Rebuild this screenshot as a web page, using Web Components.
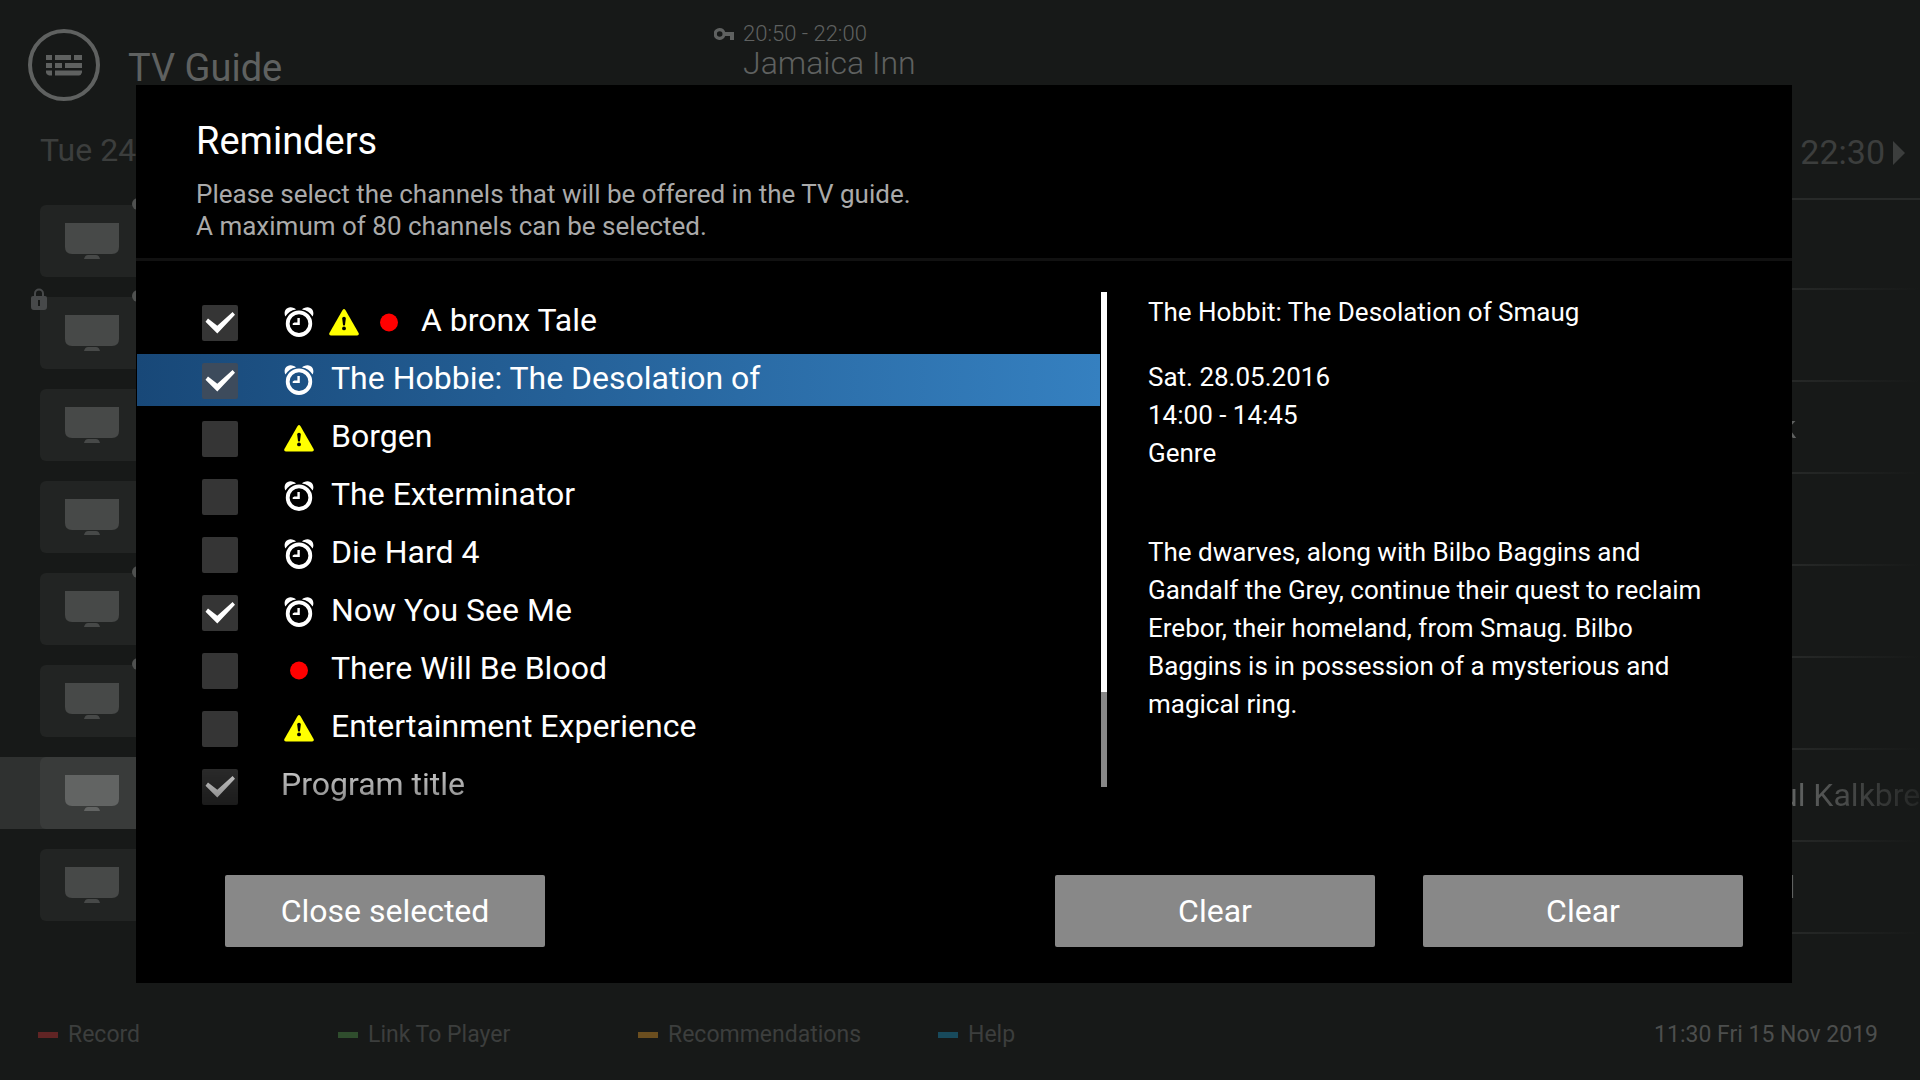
<!DOCTYPE html>
<html lang="en">
<head>
<meta charset="utf-8">
<title>TV Guide – Reminders</title>
<style>
  html, body { margin: 0; }
  body {
    background: #171918;
    color: #fff;
    font-family: Roboto, "Liberation Sans", sans-serif;
    overflow-x: hidden;
  }
</style>
</head>
<body>
<tv-guide></tv-guide>

<script>
const define = (name, html, setup) => {
  const template = document.createElement('template');
  template.innerHTML = html;
  customElements.define(name, class extends HTMLElement {
    constructor() {
      super();
      this.attachShadow({ mode: 'open' }).append(template.content.cloneNode(true));
    }
    connectedCallback() {
      if (setup) setup(this, this.shadowRoot);
    }
  });
};

/* Small status glyphs shown before a programme title */
const ICONS = {
  alarm: `<svg width="30" height="30" viewBox="0 0 30 30" fill="#fff">
    <circle cx="15" cy="16.7" r="11.3" fill="none" stroke="#fff" stroke-width="3.8"/>
    <path d="M1.4 9.6C-.4 6 .9 .8 5.4 .4 8.400 .1 10.800 1.200 12 2.400A15 15 0 0 0 1.400 9.600z"/>
    <path d="M28.600 9.600C30.400 6 29.100 .8 24.600 .4 21.600 .1 19.200 1.200 18 2.400A15 15 0 0 1 28.600 9.600z"/>
    <path d="M13.400 11h2.400v6.900H8.700v-1.300l1.600-1h3.100z"/></svg>`,
  warning: `<svg width="30" height="30" viewBox="0 0 30 30">
    <path d="M13.600 2.900q1.400-2 2.800 0L29.600 26q.8 2.400-1.400 2.400H1.800q-2.200 0-1.400-2.400z" fill="#ff0"/>
    <path d="M13.200 11.500q0-1.800 1.800-1.800t1.800 1.800l-.8 6.500q-1 1.200-2 0z" fill="#000"/>
    <circle cx="15" cy="21.400" r="1.900" fill="#000"/></svg>`,
  record: `<svg width="30" height="30" viewBox="0 0 30 30"><circle cx="15" cy="15.500" r="9" fill="#f00"/></svg>`
};

define('status-icon', `
  <style>
    :host { display: flex; justify-content: center; align-items: center; width: 36px; height: 34px; }
    svg { display: block; }
  </style>`, (el, root) => {
  root.innerHTML += ICONS[el.getAttribute('kind')];
});

define('guide-header', `
  <style>
    :host { display: grid; grid-template-columns: 714px 1fr; color: #5f6160; height: 101px; }
    .brand { display: flex; align-items: flex-end; gap: 28px; padding-left: 28px; }
    .brand svg { display: block; }
    h1 { margin: 0; padding-bottom: 11px; font-size: 38px; line-height: 44px; font-weight: 400; }
    .now { display: grid; grid-template-columns: 29px 1fr; align-content: start; padding-top: 22px; font-weight: 300; }
    .now svg { align-self: center; }
    .time { font-size: 22px; line-height: 24px; }
    .name { grid-column: 2; font-size: 32px; line-height: 34px; }
  </style>
  <div class="brand">
    <svg width="72" height="72" viewBox="0 0 72 72" fill="currentColor">
      <circle cx="36" cy="36" r="34" fill="none" stroke="currentColor" stroke-width="4"/>
      <path d="M18 26h6v5h-6zM27 26h16v5H27zM46 26h8v5h-8zM18 34h6v5h-6zM27 34h7v5h-7zM37 34h17v5H37zM18 41.500h6v5h-3q-3-1-3-3zM27 41.500h27v2q-1 3-3 3H27z"/>
    </svg>
    <h1>TV Guide</h1>
  </div>
  <div class="now">
    <svg width="20" height="12" viewBox="0 0 20 12" fill="currentColor">
      <path fill-rule="evenodd" d="M5.700 0A6 6 0 0 1 11.200 4H20v8h-4V8h-4.800A6 6 0 1 1 5.700 0zM5.700 3.200a2.800 2.800 0 1 0 0 5.600 2.800 2.800 0 0 0 0-5.600z"/>
    </svg>
    <span class="time">20:50 - 22:00</span>
    <span class="name">Jamaica Inn</span>
  </div>`);

define('day-bar', `
  <style>
    :host { display: block; height: 99px; color: #3c3e3d; }
    .bar { display: flex; justify-content: space-between; align-items: flex-start;
           box-sizing: border-box; height: 97px; padding: 30px 15px 0 40px; }
    .day { font-size: 32px; line-height: 38px; }
    .time { display: flex; gap: 8px; font-size: 34px; line-height: 42px; }
    svg { margin-top: 10px; }
    .line { height: 2px; margin-left: 160px; background: #282a29; }
  </style>
  <div class="bar">
    <span class="day">Tue 24</span>
    <span class="time">22:30<svg width="12" height="24" viewBox="0 0 12 24"><path d="M0 0l12 12L0 24z" fill="currentColor"/></svg></span>
  </div>
  <div class="line"></div>`);

define('channel-row', `
  <style>
    :host { display: grid; grid-template-columns: 160px 1fr; height: 92px;
            --tile: #222423; --glyph: #474948; }
    :host([active]) { --tile: #393b3a; --glyph: #626463; }
    .channel { box-sizing: border-box; height: 72px; margin-top: 7px; padding-left: 40px; }
    :host([active]) .channel { background: #2f3130; }
    .tile { position: relative; box-sizing: border-box; width: 104px; height: 72px; padding: 18px 25px;
            border-radius: 6px; background: var(--tile); }
    .tile > svg { display: block; }
    .dot { display: none; position: absolute; right: 0; top: -7px; width: 12px; height: 12px;
           border-radius: 50%; background: #4f5150; }
    :host([dot]) .dot { display: block; }
    .tile > .lock { display: none; position: absolute; left: -9px; top: -9px; }
    :host([locked]) .lock { display: block; }
    .programme { display: flex; justify-content: flex-end; padding-top: 26px; font-size: 32px; line-height: 38px;
                 background: linear-gradient(to right, #282a29 92%, #171918 100%) bottom / 100% 2px no-repeat; }
    .name { width: 140px; overflow: hidden; white-space: nowrap; color: transparent;
            background: linear-gradient(to right, #5f6160 12%, #242625 100%);
            -webkit-background-clip: text; background-clip: text; }
  </style>
  <div class="channel">
    <div class="tile">
      <svg width="54" height="36" viewBox="0 0 54 36" fill="var(--glyph)">
        <path d="M0 0h54v24q0 7-7 7H7q-7 0-7-7zM19 36q1-4 4-4h8q3 0 4 4z"/>
      </svg>
      <i class="dot"></i>
      <svg class="lock" width="16" height="22" viewBox="0 0 16 22">
        <path d="M4 9V5.500a4 4 0 0 1 8 0V9" fill="none" stroke="#47494a" stroke-width="2"/>
        <path fill-rule="evenodd" d="M2 8h12q2 0 2 2v9q0 3-3 3H3q-3 0-3-3v-9q0-2 2-2zM7 12v6h2v-6z" fill="#47494a"/>
      </svg>
    </div>
  </div>
  <div class="programme"><span class="name"><slot></slot></span></div>`);

define('colour-key', `
  <style>
    :host { display: flex; align-items: center; gap: 10px; width: 300px; color: #3c3e3d; }
    i { width: 20px; height: 6px; background: var(--key); }
  </style>
  <i></i><span><slot></slot></span>`);

define('guide-footer', `
  <style>
    :host { display: flex; padding: 0 42px 32px 38px; font-size: 23px; line-height: 26px; }
    time { margin-left: auto; color: #4c4e4d; }
  </style>
  <colour-key style="--key:#602424">Record</colour-key>
  <colour-key style="--key:#2f4d2d">Link To Player</colour-key>
  <colour-key style="--key:#6b4e1f">Recommendations</colour-key>
  <colour-key style="--key:#184a5c">Help</colour-key>
  <time datetime="2019-11-15T11:30">11:30 Fri 15 Nov 2019</time>`);

define('reminder-item', `
  <style>
    :host { display: block; height: 52px; --box: #353535; }
    :host([selected]) { background: linear-gradient(to right, #184878, #3580c0); --box: #3d4b5c; }
    :host([fading]) { -webkit-mask-image: linear-gradient(rgba(0,0,0,.86), rgba(0,0,0,.46));
                      mask-image: linear-gradient(rgba(0,0,0,.86), rgba(0,0,0,.46)); }
    label { display: flex; align-items: flex-start; height: 52px; padding-left: 65px; }
    .box { display: grid; margin: 9px 43px 0 0; }
    .box > * { grid-area: 1 / 1; }
    input { appearance: none; width: 36px; height: 36px; margin: 0; border-radius: 2px; background: var(--box); }
    svg { display: none; pointer-events: none; }
    input:checked + svg { display: block; }
    .icons { display: flex; gap: 9px; padding-top: 9px; }
    .icons:not(:empty) { margin-right: 14px; }
    .title { font-size: 32px; line-height: 48px; white-space: nowrap; }
  </style>
  <label>
    <span class="box">
      <input type="checkbox">
      <svg width="36" height="36" viewBox="0 0 36 36"><path d="M3.500 16.800L6 13.500l9.300 7.300L30.600 7 33 9.800 15.300 28.400z" fill="#fff"/></svg>
    </span>
    <span class="icons"></span>
    <span class="title"><slot></slot></span>
  </label>`, (el, root) => {
  root.querySelector('input').checked = el.hasAttribute('checked');
  const icons = (el.getAttribute('icons') || '').split(' ').filter(Boolean);
  root.querySelector('.icons').innerHTML = icons.map(k => `<status-icon kind="${k}"></status-icon>`).join('');
});

define('scroll-track', `
  <style>
    :host { display: block; width: 6px; height: 495px; background: #888; }
    div { height: 400px; background: #fff; }
  </style>
  <div></div>`);

define('programme-details', `
  <style>
    :host { display: block; font-size: 26px; line-height: 38px; }
    h3, p { margin: 0; font-size: inherit; font-weight: 400; }
    .meta { margin: 27px 0 61px; }
  </style>
  <h3><slot name="title"></slot></h3>
  <div class="meta"><slot name="meta"></slot></div>
  <p><slot></slot></p>`);

define('action-button', `
  <style>
    :host { display: block; width: 320px; }
    button { display: block; width: 100%; height: 72px; padding: 0; border: 0; border-radius: 2px;
             background: #888; color: #fff; font: inherit; font-size: 32px; }
  </style>
  <button type="button"><slot></slot></button>`);

define('reminder-dialog', `
  <style>
    :host { display: block; background: #000; }
    header { padding: 34px 60px 16px; border-bottom: 3px solid #111; }
    h2 { margin: 0 0 15px; font-size: 38px; line-height: 44px; font-weight: 400; }
    header p { margin: 0; font-size: 26px; line-height: 32px; color: #aaa; }
    .body { display: flex; align-items: flex-start; padding: 31px 0 0 1px; }
    .list { flex: 963 1 0; display: flex; flex-direction: column; gap: 6px; padding-top: 4px; }
    scroll-track { flex: none; margin-left: 1px; }
    programme-details { flex: 564 1 0; padding: 1px 80px 0 41px; }
    footer { display: flex; gap: 48px; padding: 63px 49px 36px 89px; }
    footer action-button:first-child { margin-right: auto; }
  </style>
  <section role="dialog" aria-labelledby="heading">
    <header>
      <h2 id="heading">Reminders</h2>
      <p>Please select the channels that will be offered in the TV guide.<br>A maximum of 80 channels can be selected.</p>
    </header>
    <div class="body">
      <div class="list">
        <reminder-item checked icons="alarm warning record">A bronx Tale</reminder-item>
        <reminder-item checked selected icons="alarm">The Hobbie: The Desolation of</reminder-item>
        <reminder-item icons="warning">Borgen</reminder-item>
        <reminder-item icons="alarm">The Exterminator</reminder-item>
        <reminder-item icons="alarm">Die Hard 4</reminder-item>
        <reminder-item checked icons="alarm">Now You See Me</reminder-item>
        <reminder-item icons="record">There Will Be Blood</reminder-item>
        <reminder-item icons="warning">Entertainment Experience</reminder-item>
        <reminder-item checked fading>Program title</reminder-item>
      </div>
      <scroll-track></scroll-track>
      <programme-details>
        <span slot="title">The Hobbit: The Desolation of Smaug</span>
        <div slot="meta">Sat. 28.05.2016</div>
        <div slot="meta">14:00 - 14:45</div>
        <div slot="meta">Genre</div>
        The dwarves, along with Bilbo Baggins and Gandalf the Grey, continue their quest to reclaim Erebor, their homeland, from Smaug. Bilbo Baggins is in possession of a mysterious and magical ring.
      </programme-details>
    </div>
    <footer>
      <action-button>Close selected</action-button>
      <action-button>Clear</action-button>
      <action-button>Clear</action-button>
    </footer>
  </section>`);

define('tv-guide', `
  <style>
    :host { display: flex; flex-direction: column; position: relative; min-height: 100vh; }
    .channels { margin-top: -2px; }
    guide-footer { margin-top: auto; }
    .overlay { position: absolute; inset: 0; padding: 85px 128px 0 136px; }
  </style>
  <guide-header></guide-header>
  <day-bar></day-bar>
  <div class="channels">
    <channel-row dot></channel-row>
    <channel-row dot locked></channel-row>
    <channel-row>k</channel-row>
    <channel-row></channel-row>
    <channel-row dot></channel-row>
    <channel-row dot></channel-row>
    <channel-row active>ul Kalkbre</channel-row>
    <channel-row>il</channel-row>
  </div>
  <guide-footer></guide-footer>
  <div class="overlay"><reminder-dialog></reminder-dialog></div>`);
</script>
</body>
</html>
